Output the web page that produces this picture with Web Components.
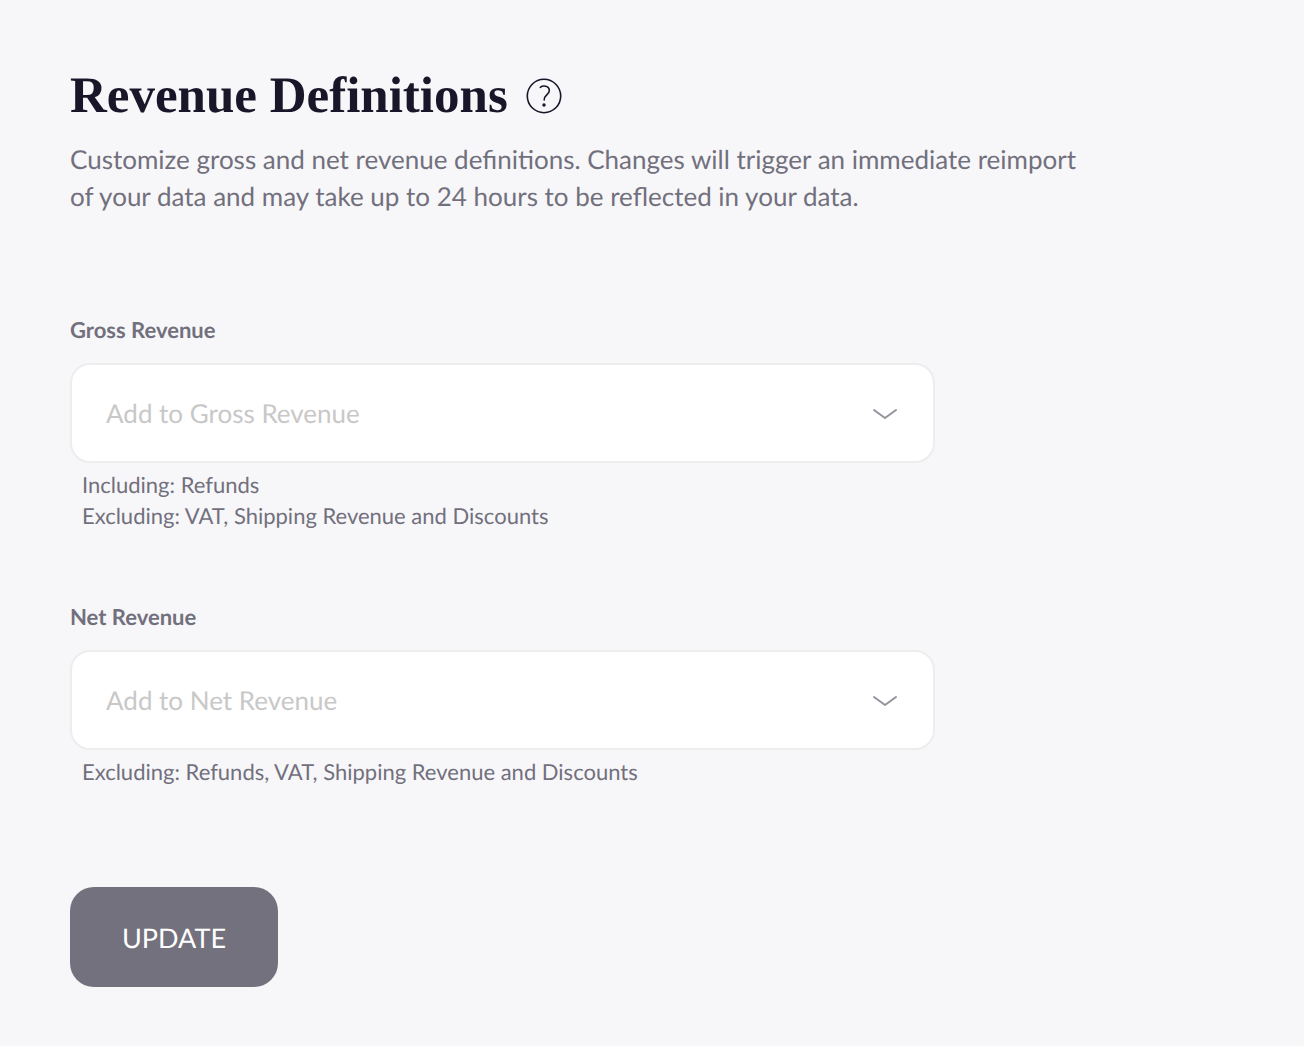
<!DOCTYPE html>
<html lang="en">
<head>
<meta charset="utf-8">
<title>Revenue Definitions</title>
<style>
body { margin: 0; background: #f7f7f9; color: #72707d; font-family: Lato, "Liberation Sans", sans-serif; text-rendering: geometricPrecision; }
</style>
</head>
<body>
<revenue-settings></revenue-settings>
<script>
class PageHeading extends HTMLElement {
  constructor() {
    super();
    this.attachShadow({ mode: "open" }).innerHTML = `
      <style>
        :host { display: block; }
        .row { display: flex; align-items: center; gap: 18px; }
        h1 { margin: 0; font: bold 51px/62px "Liberation Serif", serif; color: #191629; }
        button { display: flex; padding: 0; border: 0; background: none; color: #191629; cursor: pointer; }
        p { margin: 14px 0 0; font-size: 26px; line-height: 37px; max-width: 1020px; }
      </style>
      <div class="row">
        <h1><slot name="title"></slot></h1>
        <button type="button" aria-label="Help">
          <svg width="36" height="36" viewBox="0 0 36 36" fill="none" stroke="currentColor" stroke-width="1.6" stroke-linecap="round">
            <circle cx="18" cy="18" r="16.7"/>
            <path d="M14.300 9.300C17 7.200 23.300 7.600 23.300 12.500C23.300 17 18.200 16.500 18.200 22"/>
            <circle cx="18" cy="27" r="1.700" fill="currentColor" stroke="none"/>
          </svg>
        </button>
      </div>
      <p><slot></slot></p>`;
  }
}
customElements.define("page-heading", PageHeading);

class RevenueField extends HTMLElement {
  constructor() {
    super();
    this.attachShadow({ mode: "open" }).innerHTML = `
      <style>
        :host { display: block; }
        label { display: block; font-size: 22px; line-height: 30px; font-weight: 700; }
        .box { display: grid; align-items: center; margin-top: 18px; }
        .box > * { grid-area: 1 / 1; }
        select { appearance: none; box-sizing: border-box; width: 100%; height: 100px; margin: 0; padding: 0 80px 0 34px;
          border: 2px solid #ededee; border-radius: 20px; background: #fff; color: #c8c8c8; font: 26px Lato, sans-serif; text-rendering: inherit; }
        svg { justify-self: end; margin-right: 37px; pointer-events: none; }
        .notes { padding: 6px 12px 0; font-size: 22px; line-height: 31px; }
      </style>
      <label for="choice"></label>
      <div class="box">
        <select id="choice"><option></option></select>
        <svg width="26" height="14" viewBox="0 0 26 14" fill="none" stroke="#94939c" stroke-width="2" stroke-linecap="round" stroke-linejoin="round"><path d="M2 4L13 12L24 4"/></svg>
      </div>
      <div class="notes"><slot></slot></div>`;
  }
  connectedCallback() {
    this.shadowRoot.querySelector("label").textContent = this.getAttribute("label");
    this.shadowRoot.querySelector("option").textContent = "Add to " + this.getAttribute("label");
  }
}
customElements.define("revenue-field", RevenueField);

class PrimaryButton extends HTMLElement {
  constructor() {
    super();
    this.attachShadow({ mode: "open" }).innerHTML = `
      <style>
        :host { display: block; }
        button { height: 100px; padding: 0 52px; border: 0; border-radius: 24px; background: #74717e; color: #fff; font: 27px Lato, sans-serif; text-rendering: inherit; cursor: pointer; }
      </style>
      <button type="button"><slot></slot></button>`;
  }
}
customElements.define("primary-button", PrimaryButton);

class RevenueSettings extends HTMLElement {
  constructor() {
    super();
    this.attachShadow({ mode: "open" }).innerHTML = `
      <style>
        :host { display: block; padding: 65px 70px 59px; }
        form { display: flex; flex-direction: column; gap: 71px; max-width: 865px; margin-top: 100px; }
        .note { display: block; }
        primary-button { margin-top: 29px; }
      </style>
      <page-heading>
        <span slot="title">Revenue Definitions</span>
        Customize gross and net revenue definitions. Changes will trigger an immediate reimport of your data and may take up to 24 hours to be reflected in your data.
      </page-heading>
      <form>
        <revenue-field label="Gross Revenue">
          <span class="note">Including: Refunds</span>
          <span class="note">Excluding: VAT, Shipping Revenue and Discounts</span>
        </revenue-field>
        <revenue-field label="Net Revenue">
          <span class="note">Excluding: Refunds, VAT, Shipping Revenue and Discounts</span>
        </revenue-field>
        <primary-button>UPDATE</primary-button>
      </form>`;
  }
}
customElements.define("revenue-settings", RevenueSettings);
</script>
</body>
</html>
